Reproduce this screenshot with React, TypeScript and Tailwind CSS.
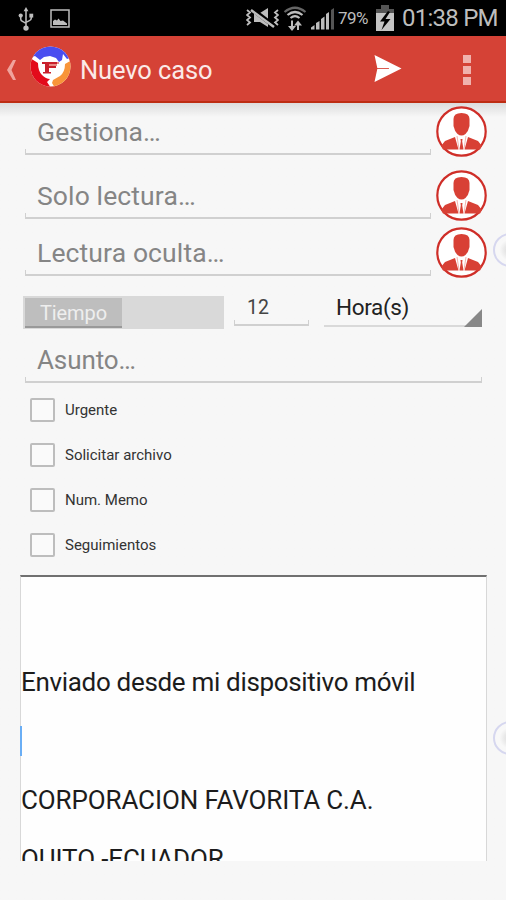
import { useState } from "react";
import type { ReactNode } from "react";

const recipients = [
  { label: "Gestiona…", row: "h-[64px]" },
  { label: "Solo lectura…", row: "h-[57px]" },
  { label: "Lectura oculta…", row: "h-[57px]" },
];

const options = ["Urgente", "Solicitar archivo", "Num. Memo", "Seguimientos"];

export default function App() {
  return (
    <div className="relative flex h-[900px] w-[506px] flex-col overflow-hidden bg-[#f7f7f7] font-['Roboto',sans-serif] text-[#222]">
      <StatusBar />
      <ActionBar />
      <main className="flex flex-1 flex-col bg-linear-to-b from-[#dcdcdc] to-[#f7f7f7] to-[14px] pt-[3px]">
        {recipients.map((r) => (
          <div key={r.label} className={`flex shrink-0 items-start pl-[25px] ${r.row}`}>
            <Underlined className="h-[49px] w-[406px] pl-3">
              <span className="text-[26.5px] leading-[52px] tracking-[0.12px] text-[#858585]">{r.label}</span>
            </Underlined>
            <Avatar />
          </div>
        ))}

        <div className="mt-[11px] flex h-[34px] shrink-0 items-start pl-[23px]">
          <div className="mt-px h-[33px] w-[201px] bg-[#d9d9d9] pl-0.5 pt-0.5">
            <div className="h-[30px] w-[97px] border-b-2 border-[#999] bg-[#bebebe] text-center text-[20px] leading-[31px] tracking-[-0.1px] text-[#eee]">
              Tiempo
            </div>
          </div>
          <Underlined className="ml-[10px] h-[31px] w-[75px] pl-[13px]">
            <span className="text-[19.5px] leading-[25px] text-[#444]">12</span>
          </Underlined>
          <div className="ml-[15px] flex h-[32px] w-[158px] justify-between border-b-2 border-[#d9d9d9] pl-3">
            <span className="text-[22.5px] leading-[24px] tracking-[-0.35px]">Hora(s)</span>
            <svg className="mt-[14px] h-[18px] w-[18px]" viewBox="0 0 18 18">
              <path d="M18 0v18H0z" fill="#888" />
            </svg>
          </div>
        </div>

        <div className="shrink-0 pl-[25px]">
          <Underlined className="mt-1 h-[50px] w-[457px] pl-3">
            <span className="text-[26px] leading-[55px] tracking-[-0.1px] text-[#858585]">Asunto…</span>
          </Underlined>
        </div>

        <div className="mt-1 flex shrink-0 flex-col pl-[30px]">
          {options.map((o) => (
            <Check key={o} label={o} />
          ))}
        </div>

        <div className="mt-2 ml-5 h-[286px] w-[467px] shrink-0 overflow-hidden border-x border-t-2 border-x-[#d8d8d8] border-t-[#707070] bg-[#fefefe] text-[26px] leading-[59px] whitespace-nowrap text-[#1c1c1c]">
          <p className="mt-[76px] tracking-[-0.32px]">Enviado desde mi dispositivo móvil</p>
          <div className="h-[59px]" />
          <p className="tracking-[-0.12px]">CORPORACION FAVORITA C.A.</p>
          <p className="tracking-[-0.12px]">QUITO -ECUADOR</p>
        </div>
      </main>

      {/* caret sits over the editor's left border */}
      <span className="absolute left-5 top-[726px] h-[30px] w-0.5 bg-[#6aaef5]" />
      <Handle className="top-[233px]" />
      <Handle className="top-[721px]" />
    </div>
  );
}

function StatusBar() {
  return (
    <div className="flex h-9 shrink-0 items-center bg-black text-[#bdbdbd]">
      <svg className="ml-[18px] h-[25px] w-4" viewBox="0 0 16 26" fill="none" stroke="currentColor" strokeWidth="1.600">
        <path d="M8 4v18M2.500 10v3.500q0 2 2 2.500L8 18M13.500 10v2.500q0 2-2 2.700L8 17" />
        <path d="M8 1l2.500 4.500h-5z" fill="currentColor" stroke="none" />
        <circle cx="8" cy="23" r="2.800" fill="currentColor" stroke="none" />
        <circle cx="2.500" cy="10" r="2.200" fill="currentColor" stroke="none" />
        <path d="M11.500 8h4v4h-4z" fill="currentColor" stroke="none" />
      </svg>
      <svg className="ml-4 h-[19px] w-[20px]" viewBox="0 0 20 19">
        <path d="M1 1h18v17H1z" fill="none" stroke="currentColor" strokeWidth="1.500" />
        <path d="M3 16v-4l2-1.500 2 1 1.500-2 2 2.500 2.500-.5 4 3v1.500z" fill="currentColor" />
      </svg>

      {/* vibrate / muted */}
      <svg className="ml-[176px] h-[22px] w-[33px]" viewBox="0 0 33 22" fill="none" stroke="currentColor">
        <path d="M1 3l3 2.500L1 8l3 2.500L1 13l3 2.500L1 18M32 3l-3 2.500L32 8l-3 2.500 3 2.500-3 2.500 3 2.500" strokeWidth="1.800" />
        <path d="M8 6h6l8-5v19l-8-5H8z" fill="currentColor" stroke="none" />
        <path d="M6 2l22 17" stroke="#000" strokeWidth="4.500" />
        <path d="M5 3l23 17" strokeWidth="2.500" />
      </svg>
      {/* wifi with traffic arrows */}
      <svg className="ml-1 mt-0.5 h-[26px] w-[24px]" viewBox="0 0 24 26" fill="none" stroke="currentColor" strokeWidth="2.200">
        <path d="M1.500 6Q12-2.500 22.500 6" stroke="#666" />
        <path d="M4.500 9q7.500-6 15 0M7.500 12q4.500-3.600 9 0" />
        <path d="M9 14.500v7M15 24v-7" strokeWidth="2" />
        <path d="M5 20h8l-4 5zM11 19.500h8l-4-5z" fill="currentColor" stroke="none" />
      </svg>
      {/* signal */}
      <svg className="ml-[4px] h-[23px] w-[23px]" viewBox="0 0 23 23" fill="currentColor">
        <path d="M0 22.500v-2L3.500 18v4.500zM5 22.500V16l3.500-2v8.500zM10 22.500V12l3.500-2.500v13zM15 22.500V7l3-2v17.500z" />
        <path d="M20 22.500V3l3-2v21.500z" fill="#555" />
      </svg>
      <span className="ml-1 w-[31px] text-[17px] leading-9 tracking-[-0.6px] whitespace-nowrap">79%</span>
      <svg className="ml-[7px] h-[26px] w-[18px]" viewBox="0 0 18 26">
        <path d="M5 0h8v4h5v7H0V4h5z" fill="#555" />
        <path d="M0 8h18v18H0z" fill="#c4c4c4" />
        <path d="M12 6l-8 10.500h4.500L5.500 25l9-11H9.500L14 7z" fill="#000" />
      </svg>
      <span className="ml-2 text-[24px] leading-9 tracking-[-0.75px] whitespace-nowrap">01:38 PM</span>
    </div>
  );
}

function ActionBar() {
  return (
    <header className="flex h-[67px] shrink-0 items-center border-b-2 border-[#bd2c12] bg-[#d54236] text-white">
      <svg className="ml-[7px] mt-0.5 h-[20px] w-[9px]" viewBox="0 0 9 20" fill="#f0a49d">
        <path d="M6 0h3L4.500 10 9 20H6L0 10z" />
      </svg>
      <Logo />
      <h1 className="ml-[8px] mt-[3px] w-[140px] text-[25.5px] leading-[64px] tracking-[-0.1px] whitespace-nowrap text-[#fbeae8]">
        Nuevo caso
      </h1>
      <svg className="ml-[154px] h-[27px] w-[28px]" viewBox="0 0 28 28">
        <path d="M0 0l28 14L0 28l3-14z" fill="#fff" />
        <path d="M2 14h13" stroke="#d54236" strokeWidth="0.900" />
      </svg>
      <div className="ml-[61px] mt-0.5 flex flex-col gap-[3px]">
        <span className="size-2 bg-[#f0b2ad]" />
        <span className="size-2 bg-[#f0b2ad]" />
        <span className="size-2 bg-[#f0b2ad]" />
      </div>
    </header>
  );
}

function Logo() {
  return (
    <svg className="-mt-1 ml-[14px] h-[42px] w-[42px]" viewBox="0 0 42 42">
      <defs>
        <clipPath id="disc">
          <circle cx="20.500" cy="20.500" r="20" />
        </clipPath>
      </defs>
      <g clipPath="url(#disc)">
        <path d="M0 0h42v42H0z" fill="#fff" />
        <path d="M2 11V0h38v12l-3 1-4-5-1 6-3 2-3-4-6-2-6 1-4 3-5-4z" fill="#4a4df0" />
        <path d="M0 12l8 5q0 8 4 12 4 4 8 4l-3 3 4 6H0z" fill="#e30b1b" />
        <path d="M42 14l-7 4q0 8-5 12l-7 4-1 3 3 5h17z" fill="#f8953a" />
      </g>
      {/* serif flag mark on the face */}
      <path d="M12 16h15v2h-8v2h7v2h-7v4h2v1.500h-8V26h2v-8h-3z" fill="#c9202c" />
      <path d="M27 16h2v2h-2zM19 18h8v2h-8z" fill="#e88a86" />
    </svg>
  );
}

function Underlined({ className, children }: { className: string; children: ReactNode }) {
  return (
    <div className={`relative shrink-0 whitespace-nowrap ${className}`}>
      {children}
      <span className="absolute inset-x-0 bottom-0 h-1.5 border-x border-b-2 border-[#d0d0d0]" />
    </div>
  );
}

function Avatar() {
  return (
    <svg className="ml-[5px] h-[51px] w-[51px] shrink-0" viewBox="0 0 51 51">
      <circle cx="25.500" cy="25.500" r="24.200" fill="#fff" stroke="#cf2e28" strokeWidth="2.200" />
      <path d="M17.500 13q0-6 8-6t8 6v7q-1 5-4 8-4 3-8 0-3-3-4-8z" fill="#d84035" />
      <path d="M19 31L9 35l-4 5 2 3.500h15.500zM32 31l10 4 4 5-2 3.500H28.500z" fill="#d84035" />
      <path d="M24.500 33h2l-.3 2.500 1.300 8h-4l1.300-8z" fill="#d84035" />
      <path d="M21 30l2 13M30 30l-2 13" stroke="#f3b5b0" strokeWidth="1" />
    </svg>
  );
}

function Check({ label }: { label: string }) {
  const [checked, setChecked] = useState(false);

  return (
    <label className="flex h-[45px] items-center gap-[10px]">
      <input
        type="checkbox"
        checked={checked}
        onChange={(e) => setChecked(e.target.checked)}
        className="h-6 w-[25px] appearance-none rounded-[2px] border-2 border-[#bdbdbd] bg-[#fafafa] checked:bg-[#b5b5b5]"
      />
      <span className="pt-px text-[15px] leading-none text-[#333]">{label}</span>
    </label>
  );
}

// edge panel tab, half outside the screen
function Handle({ className }: { className: string }) {
  return (
    <div
      className={`absolute left-[493px] size-[34px] rounded-full border-2 border-[#d6d7ef] bg-radial from-[#d8d8d8] to-[#f8f8f8] to-50% ${className}`}
    />
  );
}
